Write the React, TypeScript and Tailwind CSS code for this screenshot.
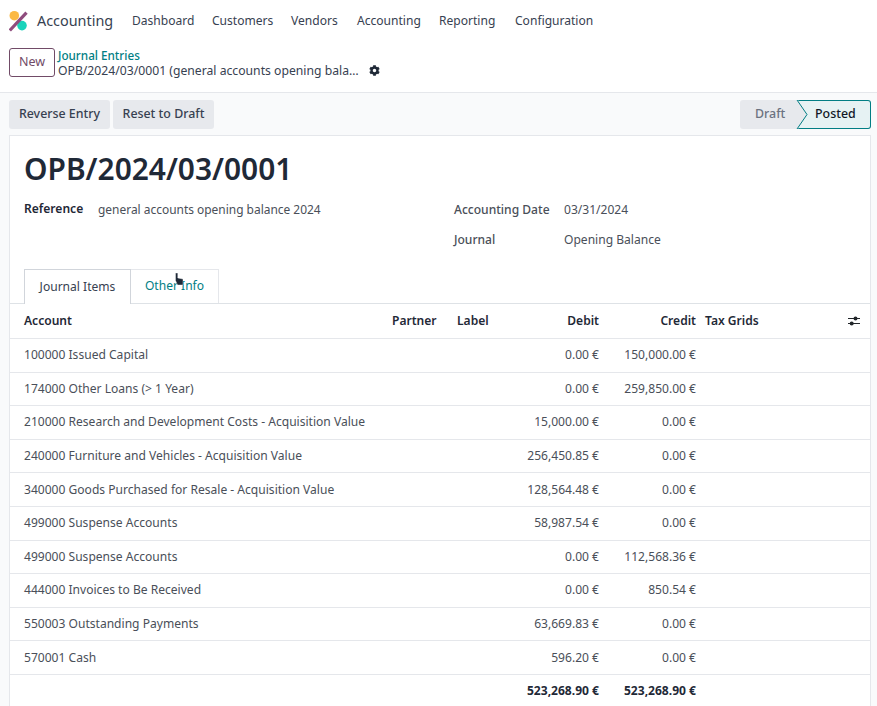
import React from "react";
import { FaCog } from "react-icons/fa";

const menu = [
  ["Dashboard", "w-[80px]"],
  ["Customers", "w-[79px]"],
  ["Vendors", "w-[66px]"],
  ["Accounting", "w-[82px]"],
  ["Reporting", "w-[76px]"],
  ["Configuration", "w-[80px]"],
];

const rows = [
  ["100000 Issued Capital", "0.00 €", "150,000.00 €"],
  ["174000 Other Loans (> 1 Year)", "0.00 €", "259,850.00 €"],
  ["210000 Research and Development Costs - Acquisition Value", "15,000.00 €", "0.00 €"],
  ["240000 Furniture and Vehicles - Acquisition Value", "256,450.85 €", "0.00 €"],
  ["340000 Goods Purchased for Resale - Acquisition Value", "128,564.48 €", "0.00 €"],
  ["499000 Suspense Accounts", "58,987.54 €", "0.00 €"],
  ["499000 Suspense Accounts", "0.00 €", "112,568.36 €"],
  ["444000 Invoices to Be Received", "0.00 €", "850.54 €"],
  ["550003 Outstanding Payments", "63,669.83 €", "0.00 €"],
  ["570001 Cash", "596.20 €", "0.00 €"],
];

const gridCols = "grid grid-cols-[368px_65px_60px_82px_97px_1fr] pl-[14px] items-center";

const Logo = () => (
  <svg width="20" height="22" viewBox="0 0 20 22" className="shrink-0">
    <circle cx="5.3" cy="5.7" r="4.8" fill="#fbb945" />
    <circle cx="13" cy="15.6" r="4.8" fill="#1ad3bb" />
    <path d="M0.8 20.5 L17.5 2.7" stroke="#8f4c7d" strokeWidth="3.2" />
  </svg>
);

const AdjustIcon = () => (
  <svg width="12" height="10" viewBox="0 0 12 10">
    <path d="M0 2.5h12M0 7.5h12" stroke="#212529" strokeWidth="1.2" />
    <circle cx="7.5" cy="2.5" r="2" fill="#212529" />
    <circle cx="3.7" cy="7.5" r="2" fill="#212529" />
  </svg>
);

const App = () => {
  return (
    <div className="w-[877px] h-[706px] overflow-hidden bg-[#f9fafb] text-[12.07px] text-[#4a4f59] font-['Noto_Sans','Open_Sans',sans-serif] flex flex-col relative">
      <nav className="h-[42px] bg-white flex items-center pl-[9px] shrink-0">
        <Logo />
        <span className="ml-[8px] w-[95px] text-[14.4px] text-[#374151]">Accounting</span>
        <div className="flex text-[#374151]">
          {menu.map(([m, w]) => (
            <span key={m} className={w}>{m}</span>
          ))}
        </div>
      </nav>

      <div className="h-[51px] bg-white border-b border-[#e5e7eb] flex pl-[9px] pt-[6px] shrink-0">
        <button className="w-[46px] h-[29px] border border-[#714b67] rounded-[3px] text-[12.5px] text-[#714b67] flex items-center justify-center">
          New
        </button>
        <div className="ml-[3px] leading-[15px]">
          <div className="text-[#017e84] font-medium text-[11.7px]">Journal Entries</div>
          <div className="flex items-center text-[#374151] text-[12.2px]">
            <span className="whitespace-nowrap">OPB/2024/03/0001 (general accounts opening bala…</span>
            <FaCog className="ml-[10px] text-[#1f2937] w-[11px] h-[11px]" />
          </div>
        </div>
      </div>

      <div className="flex items-center justify-between h-[42px] pl-[9px] pr-[6px] shrink-0 text-[12.4px] font-medium">
        <div className="flex gap-[3px]">
          <button className="w-[101px] h-[29px] pt-[1px] rounded-[3px] bg-[#e7e9ed] text-[#374151] font-medium">Reverse Entry</button>
          <button className="w-[101px] h-[29px] pt-[1px] rounded-[3px] bg-[#e7e9ed] text-[#374151] font-medium">Reset to Draft</button>
        </div>
        <div className="flex h-[29px] relative">
          <div className="w-[57px] bg-[#e7e9ed] rounded-l-[3px] text-[#6b7280] flex items-center pl-[15px] pt-[1px]">Draft</div>
          <div className="w-[74px] bg-[#e6f2f3] border border-l-0 border-[#017e84] rounded-r-[3px] text-[#111827] flex items-center pl-[18px] pt-[1px]">
            Posted
          </div>
          <svg width="14" height="29" viewBox="0 0 14 29" className="absolute left-[55px] top-0">
            <path d="M0 0 L3 0 L12 14.5 L3 29 L0 29 Z" fill="#e7e9ed" />
            <path d="M2 0 L12 14.5 L2 29" fill="none" stroke="#017e84" strokeWidth="1" />
          </svg>
        </div>
      </div>

      <main className="ml-[9px] mr-[6px] bg-white border border-[#e5e7eb] flex-1 flex flex-col">
        <div className="pl-[14px] pr-[14px] pt-[14px]">
          <h1 className="text-[29.9px] leading-[38px] font-semibold text-[#1f2937]">OPB/2024/03/0001</h1>
          <div className="grid grid-cols-[430px_1fr] mt-[12px]">
            <div className="flex items-start">
              <span className="font-semibold text-[#1f2937] w-[74px] leading-[18px]">Reference</span>
              <span className="leading-[18px] mt-[1px] text-[11.95px]">general accounts opening balance 2024</span>
            </div>
            <div className="flex flex-col gap-[12px] leading-[18px] mt-[1px]">
              <div className="flex">
                <span className="w-[110px] font-medium">Accounting Date</span>
                <span>03/31/2024</span>
              </div>
              <div className="flex">
                <span className="w-[110px] font-medium">Journal</span>
                <span>Opening Balance</span>
              </div>
            </div>
          </div>
        </div>

        <div className="h-[35px] mt-[20px] flex pl-[14px] border-b border-[#dee2e6] shrink-0">
          <div className="w-[107px] h-[35px] bg-white border border-b-0 border-[#d1d5db] flex items-center justify-center text-[#374151]">
            Journal Items
          </div>
          <div className="w-[88px] h-[34px] border border-l-0 border-b-0 border-[#e5e7eb] flex items-center justify-center text-[#017e84]">
            Other Info
          </div>
        </div>

        <div className={`${gridCols} h-[35px] border-b border-[#e5e7eb] text-[#1f2937] font-semibold shrink-0`}>
          <span>Account</span>
          <span>Partner</span>
          <span>Label</span>
          <span className="text-right">Debit</span>
          <span className="text-right">Credit</span>
          <div className="flex items-center justify-between pl-[9px] pr-[10px]">
            <span>Tax Grids</span>
            <AdjustIcon />
          </div>
        </div>

        {rows.map((r, i) => (
          <div key={i} className={`${gridCols} h-[33.6px] border-b border-[#e5e7eb] shrink-0`}>
            <span className="whitespace-nowrap">{r[0]}</span>
            <span />
            <span />
            <span className="text-right">{r[1]}</span>
            <span className="text-right">{r[2]}</span>
            <span />
          </div>
        ))}

        <div className={`${gridCols} h-[33px] font-bold text-[#1f2937] shrink-0`}>
          <span />
          <span />
          <span />
          <span className="text-right whitespace-nowrap">523,268.90 €</span>
          <span className="text-right">523,268.90 €</span>
          <span />
        </div>
      </main>

      {/* mouse pointer over the Other Info tab */}
      <svg width="10" height="14" viewBox="0 0 10 14" className="absolute left-[174px] top-[272px]">
        <path d="M1.5 1 L3.8 1 L3.8 6 L9 7 L9 13 L3.5 13 L1.5 8.5 Z" fill="#1f2937" stroke="#fff" strokeWidth="0.4" />
      </svg>
    </div>
  );
};

export default App;
